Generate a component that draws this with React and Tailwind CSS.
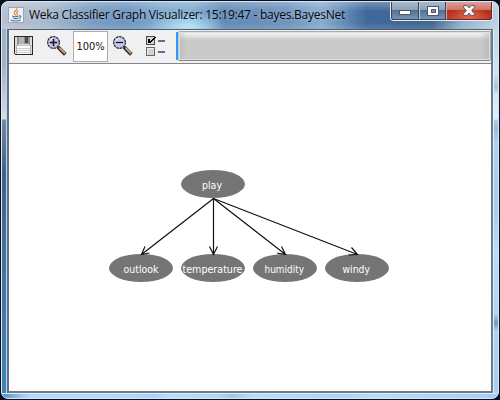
const CRISP = 'crispEdges';

function JavaIcon() {
  return (
    <svg className="h-4 w-4 shrink-0" viewBox="0 0 16 16">
      <rect x="0.5" y="0.5" width="15" height="15" fill="#eef1f5" stroke="#9aa7ba" />
      <path d="M8.8 1.2c1.2 2-3.6 3.2-2.4 5.2.4.8 1 1.2 1.2 1.9M10.4 3.8c-2.2 1.1-1.9 2-1.3 2.8.5.7.1 1.3-.3 1.7" fill="none" stroke="#ee7d28" strokeWidth="1.2" />
      <path d="M4.2 9c1.4.8 4.8.8 6.4 0M5 11c1.6.7 4 .7 5.4 0M2.6 13c2.6 1.4 7.5 1.4 10 0M11 9c2.6-.6 2.1 1.8.2 2.4" fill="none" stroke="#46749c" strokeWidth="1.1" />
    </svg>
  );
}

function SaveIcon() {
  return (
    <svg className="h-[19px] w-[19px] shrink-0" viewBox="0 0 19 19" shapeRendering={CRISP}>
      <path d="M0 0h18l1 1v18H1l-1-1z" fill="#292929" />
      <path d="M1 1h17v17H1z" fill="#dedede" />
      <path d="M3 1h1v8H3zM15 1h1v8h-1z" fill="#8d8d8d" />
      <path d="M1 9h17v1H1z" fill="#c2c2c2" />
      <path d="M4 1h11v7H4z" fill="#929292" />
      <path d="M5 1h5v7H5z" fill="#b4b4b4" />
      <path d="M11 1h3v6h-3z" fill="#4f4f4f" />
      <path d="M3 10h13v8H3z" fill="#fff" />
      <path d="M3 12h13v1H3zM3 14h13v1H3zM3 16h13v1H3z" fill="#cfcfcf" />
      <path d="M2 10h1v8H2zM16 10h1v8h-1z" fill="#b3b3b3" />
    </svg>
  );
}

function ZoomIcon({ plus }) {
  return (
    <svg className="h-5 w-5 shrink-0" viewBox="0 0 20 20">
      <path d="M11 11l7.3 7.3" stroke="#2b2523" strokeWidth="3.8" />
      <path d="M12.3 11.8l5.7 5.7" stroke="#b98d70" strokeWidth="1.9" />
      <path d="M12.8 11.4l5.2 5.2" stroke="#ecd0b5" strokeWidth="0.8" />
      <circle cx="6.5" cy="6.5" r="6" fill="#c6c6e6" stroke="#77779a" strokeWidth="1" />
      <circle cx="6.5" cy="6.5" r="5.8" fill="none" stroke="#20202c" strokeWidth="1.1" strokeDasharray="2 1.3" />
      <path d="M3 4.5C3.8 3 5 2.2 6.5 2.2" fill="none" stroke="#f2f2ff" strokeWidth="1.1" />
      <path d={plus ? 'M3 6h7v1H3zM6 3h1v7H6z' : 'M3 6h7v1H3z'} fill="#08080e" stroke="#25253a" strokeWidth={plus ? 0.6 : 0.2} />
    </svg>
  );
}

function OptionsIcon() {
  return (
    <svg className="h-5 w-[19px] shrink-0" viewBox="0 0 19 20" shapeRendering={CRISP}>
      <path d="M0 0h9v9H0z" fill="#4a4a4a" />
      <path d="M1 1h7v7H1z" fill="#d6d6d6" />
      <path d="M0 11h9v9H0z" fill="#666" />
      <path d="M1 12h7v7H1z" fill="#d3d3d3" />
      <path d="M1 12h7v1H1zM1 12h1v7H1z" fill="#f0f0f0" />
      <path d="M2 3h2v2h1V4h1V3h1V2h1V1h2v1H9v1H8v1H7v1H6v1H5v1H2z" fill="#050505" />
      <path d="M12 4h7v2h-7zM12 15h7v2h-7z" fill="#6b6899" />
    </svg>
  );
}

function WindowControls() {
  return (
    <div className="mr-[5px] flex h-[19px] w-[103px] shrink-0 overflow-hidden rounded-b-[4px] border border-t-0 border-[#e1edf7] bg-[#29384e]">
      <div className="flex h-full w-[28px] items-center justify-center rounded-bl-[3px] border border-t-0 border-[#34465f] bg-[linear-gradient(#a9b9ca_0%,#8fa3ba_44%,#526e91_48%,#7995b4_100%)]">
        <svg className="mt-1 h-[5px] w-3" viewBox="0 0 12 5" shapeRendering={CRISP}><path d="M.5.5h11v4H.5z" fill="#fff" stroke="#50566b" /></svg>
      </div>
      <div className="flex h-full w-[27px] items-center justify-center border-r border-b border-l border-[#34465f] border-l-[#bdcbd9] bg-[linear-gradient(#a9b9ca_0%,#8fa3ba_44%,#526e91_48%,#7995b4_100%)]">
        <svg className="h-[10px] w-3" viewBox="0 0 12 10" shapeRendering={CRISP}><path d="M.5.5h11v9H.5z" fill="#fff" stroke="#50566b" /><path d="M4 3.5h4v3H4z" fill="#7792b0" stroke="#50566b" /></svg>
      </div>
      <div className="flex h-full flex-1 items-center justify-center rounded-br-[3px] border-r border-b border-l border-[#6d2523] border-l-[#d9aaa4] bg-[radial-gradient(ellipse_at_bottom,#df6948_0%,transparent_65%),linear-gradient(#dda095_0%,#cf786a_44%,#b52d1c_48%,#bd3d2c_100%)]">
        <svg className="h-[11px] w-3" viewBox="0 0 12 11"><path d="M.7.6h3.5L6 2.9 7.8.6h3.5v1.8L8.6 5.5l2.7 3.1v1.8H7.8L6 8.1l-1.8 2.3H.7V8.6l2.7-3.1L.7 2.4z" fill="#fff" stroke="#58546a" strokeWidth="1" /></svg>
      </div>
    </div>
  );
}

const NODES = [
  { label: 'play', cx: 213, cy: 120, x: 202, w: 20 },
  { label: 'outlook', cx: 141, cy: 204, x: 123.5, w: 35 },
  { label: 'temperature', cx: 213, cy: 204, x: 182.5, w: 60 },
  { label: 'humidity', cx: 285, cy: 204, x: 264.5, w: 39.5 },
  { label: 'windy', cx: 357, cy: 204, x: 342.5, w: 27.5 },
];

function Graph() {
  return (
    <svg className="block h-[327px] w-[482px]" viewBox="9 0 482 327">
      {NODES.map((n) => (
        <g key={n.label}>
          <ellipse cx={n.cx} cy={n.cy} rx="32" ry="14" fill="#757575" />
          <text x={n.x} y={n.cy + 5} textLength={n.w} lengthAdjust="spacingAndGlyphs" fill="#fff" className="font-['DejaVu_Sans_Condensed','DejaVu_Sans',sans-serif] text-[11px]">{n.label}</text>
        </g>
      ))}
      <g fill="none" stroke="#111" strokeWidth="1.2">
        <path d="M213.5 134.5L141.5 190.5M145 182.5L141.5 190.5L149.5 189" />
        <path d="M213.5 134.5V190.5M209.5 182.5L213.5 190.5L217.5 182.5" />
        <path d="M213.5 134.5L285.5 190.5M281.5 182.5L285.5 190.5L277 189" />
        <path d="M213.5 134.5L357.5 190.5M351.5 183.5L357.5 190.5L348.5 191" />
      </g>
    </svg>
  );
}

export default function App() {
  return (
    <div className="h-[400px] w-[500px] overflow-hidden bg-[#080e1b] p-px">
      <div className="flex h-[398px] w-[498px] flex-col overflow-hidden rounded-[7px] border border-[#d4e7f7] bg-[#a9cdf0]">
        <header className="flex h-[27px] shrink-0 items-start bg-[linear-gradient(rgba(255,255,255,.28),transparent_35%,transparent_75%,rgba(255,255,255,.12)),radial-gradient(ellipse_38px_14px_at_186px_24px,#b4e4fa,transparent),linear-gradient(90deg,#b8c1d1_0px,#a7b8cc_45px,#7a9bc1_90px,#6c95c0_125px,#7fa9ce_160px,#82add2_190px,#5f88b5_220px,#6c93bd_285px,#86aacd_320px,#40699b_365px,#41658f_430px,#92b2cc_460px,#bdd1e3_496px)]">
          <div className="flex h-full min-w-0 flex-1 items-center pb-px pl-[6px]">
            <JavaIcon />
            <h1 className="ml-[5px] font-['Open_Sans','Noto_Sans',sans-serif] text-[12px] leading-4 font-normal tracking-[-0.26px] whitespace-nowrap text-[#05080d] [text-shadow:0_0_5px_#ffffff80]">Weka Classifier Graph Visualizer: 15:19:47 - bayes.BayesNet</h1>
          </div>
          <WindowControls />
        </header>
        <div className="flex min-h-0 flex-1">
          <div className="w-[5px] shrink-0 border-r border-[#b7d9ee] bg-[linear-gradient(#a4b0c4_0px,#a6b1c5_35px,#d7dce5_90px,#7289a8_91px,#465f86_145px,#47719f_230px,#4083b5_362px)]" />
          <div className="flex w-[486px] shrink-0 flex-col">
            <div className="h-[364px] border-2 border-t border-[#6e7b89] border-t-[#4f5f6c] border-l-[#637180] bg-white">
              <div className="flex h-[34px] items-start border-b border-[#83858f] bg-[#f0f0f0] pt-px">
                <div className="pt-[5px] pl-[5px]"><SaveIcon /></div>
                <div className="pt-[5px] pl-[14px]"><ZoomIcon plus /></div>
                <div className="ml-[6px] flex h-[31px] w-[35px] shrink-0 items-center justify-center border border-[#ababab] bg-white pt-px font-['DejaVu_Sans_Condensed','DejaVu_Sans',sans-serif] text-[11px] tracking-[-0.1px] text-[#111]">100%</div>
                <div className="pt-[5px] pl-[5px]"><ZoomIcon /></div>
                <div className="pt-[5px] pl-[13px]"><OptionsIcon /></div>
                <div className="ml-[11px] flex h-[30px] min-w-0 flex-1 items-center">
                  <div className="h-[28px] w-[2px] shrink-0 bg-[#3399ff]" />
                  <div className="h-[30px] flex-1 rounded-[2px] border border-[#aaa] border-b-[#858585] border-l-[#c4c4c4] bg-[linear-gradient(90deg,#aaaaaa60_0px,transparent_8px,transparent_calc(100%-10px),#aaaaaa80_100%),linear-gradient(#fafafa_0px,#dddddd_5px,#c9c9c9_8px,#cacaca_100%)] shadow-[inset_0_0_0_1px_#e0e0e0]" />
                </div>
              </div>
              <Graph />
            </div>
          </div>
          <div className="flex-1 border-l border-[#daf1ff] bg-[linear-gradient(#c2d7e9_0px,#d4e2ef_45px,#aebfce_58px,#d5e5f2_65px,#e5eff7_90px,#a9cdf0_91px,#9fbdd9_100px,#afd2f4_115px,#a8cbed_180px,#b8dcfb_220px,#b2d5f5_285px,#7895b2_294px,#add2f4_302px,#a9cdf0_362px)]" />
        </div>
        <div className="h-[5px] shrink-0 border-t border-[#d7efff] bg-[linear-gradient(90deg,#598fb9_0px,#a0caee_20px,#b5d9fb_30px,#b3d7f9_130px,#acd1f4_150px,#b8dcfd_170px,#b4d6f5_215px,#a4c4e1_230px,#b8dcfc_250px,#aed2f5_340px,#b8dbfb_370px,#a9cdf0_496px)]" />
      </div>
    </div>
  );
}
